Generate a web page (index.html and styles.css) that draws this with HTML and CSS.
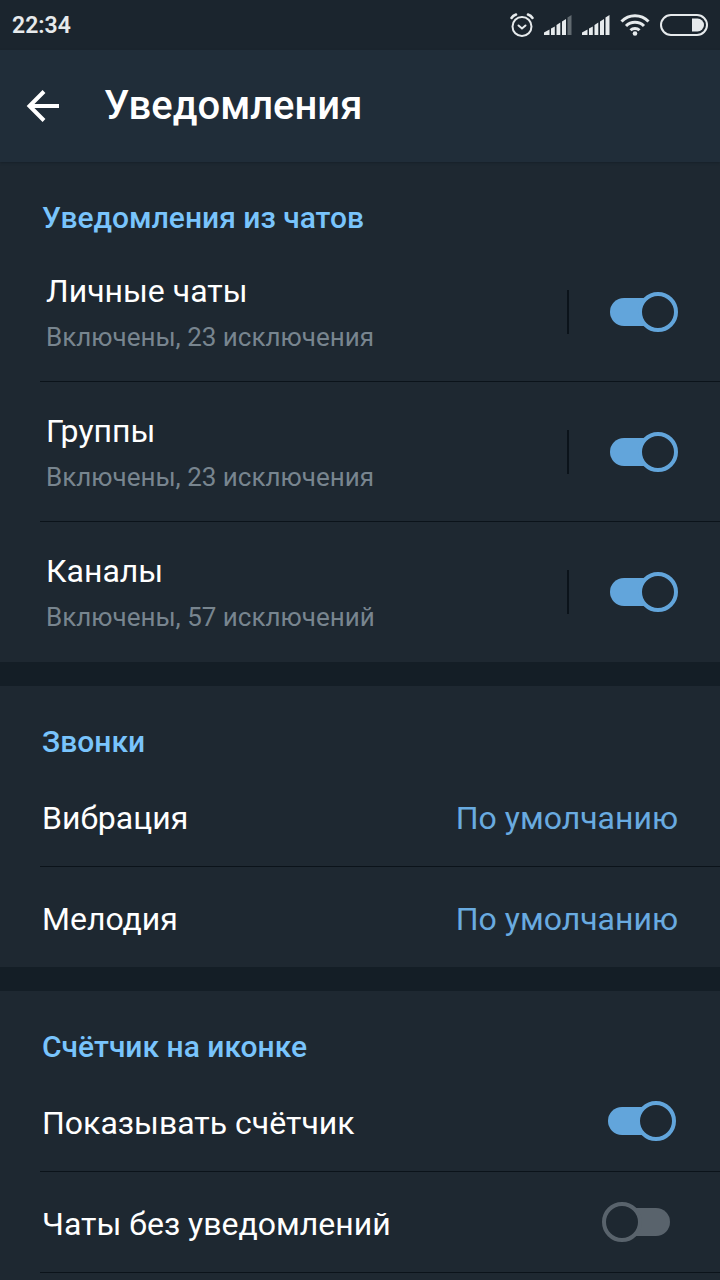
FILE: index.html
```html
<!DOCTYPE html>
<html lang="ru">

<head>
    <meta charset="UTF-8">
    <meta name="viewport" content="width=device-width, initial-scale=1.0">
    <title>Уведомления</title>
    <link rel="stylesheet" href="styles.css">
</head>

<body>
    <!-- status bar -->
    <div class="status">
        <span class="time">22:34</span>
        <div class="status-icons">
            <svg width="24" height="24" viewBox="0 0 24 24" fill="none" stroke="currentColor" stroke-width="2" stroke-linecap="round">
                <circle cx="12" cy="13.5" r="9.5" />
                <path d="M8.5 12.5l3.5 3 3.5-3" />
                <path stroke-width="2.5" d="M1.500 5Q3 2.500 6 1.500M22.500 5Q21 2.500 18 1.500" />
            </svg>
            <svg width="28" height="20" viewBox="0 0 28 20" fill="currentColor">
                <path d="M0 20v-2.500l5.500-3V20zM7 13.500l3.800-2V20H7zM12.500 10l3.800-2.500V20h-3.800zM18 6.500l4-2.500v16h-4z" />
                <path class="faded" d="M23.500 2.500L27.500 0v20h-4z" />
            </svg>
            <svg width="28" height="20" viewBox="0 0 28 20" fill="currentColor">
                <path d="M0 20v-2.500l5.500-3V20zM7 13.500l3.800-2V20H7zM12.500 10l3.800-2.500V20h-3.800zM18 6.500l4-2.500v16h-4zM23.500 2.500L27.500 0v20h-4z" />
            </svg>
            <svg width="30" height="22" viewBox="0 0 30 22" fill="none" stroke="currentColor" stroke-width="3">
                <path d="M1.500 7.500a19 19 0 0 1 27 0M6 12a12.700 12.700 0 0 1 18 0M10.500 16.300a6.400 6.400 0 0 1 9 0" />
                <circle cx="15" cy="19.500" r="2.300" fill="currentColor" stroke="none" />
            </svg>
            <svg width="48" height="22" viewBox="0 0 48 22">
                <rect x="1" y="1" width="46" height="20" rx="10" fill="none" stroke="currentColor" stroke-width="2" />
                <path d="M32 4.500h5.500a6.500 6.500 0 0 1 0 13H32z" fill="currentColor" />
            </svg>
        </div>
    </div>

    <header class="header">
        <button class="back" type="button" aria-label="Назад">
            <svg width="34" height="34" viewBox="0 0 34 34" fill="none" stroke="currentColor" stroke-width="4">
                <path d="M33 17H4M18 2.500L3.500 17 18 31.500" />
            </svg>
        </button>
        <h1>Уведомления</h1>
    </header>

    <main>
        <section class="chats">
            <h2>Уведомления из чатов</h2>
            <div class="row">
                <label class="text" for="private">Личные чаты<small>Включены, 23 исключения</small></label>
                <span class="divider"></span>
                <input class="switch" type="checkbox" id="private" checked>
            </div>
            <div class="row">
                <label class="text" for="groups">Группы<small>Включены, 23 исключения</small></label>
                <span class="divider"></span>
                <input class="switch" type="checkbox" id="groups" checked>
            </div>
            <div class="row">
                <label class="text" for="channels">Каналы<small>Включены, 57 исключений</small></label>
                <span class="divider"></span>
                <input class="switch" type="checkbox" id="channels" checked>
            </div>
        </section>

        <section>
            <h2>Звонки</h2>
            <button class="row" type="button"><span class="text">Вибрация</span><span class="value">По умолчанию</span></button>
            <button class="row" type="button"><span class="text">Мелодия</span><span class="value">По умолчанию</span></button>
        </section>

        <section class="badge">
            <h2>Счётчик на иконке</h2>
            <div class="row">
                <label class="text" for="counter">Показывать счётчик</label>
                <input class="switch" type="checkbox" id="counter" checked>
            </div>
            <div class="row">
                <label class="text" for="muted">Чаты без уведомлений</label>
                <input class="switch" type="checkbox" id="muted">
            </div>
        </section>
    </main>
</body>

</html>
```
FILE: styles.css
```css
*,
*::before,
*::after {
    margin: 0;
    padding: 0;
    box-sizing: border-box;
}

body {
    background-color: #1e2831;
    color: #fff;
    font-family: Roboto, "Noto Sans", sans-serif;
    font-size: 32px;
    line-height: 36px;
}

button {
    background: none;
    border: 0;
    color: inherit;
    font: inherit;
    text-align: left;
}

svg {
    display: block;
}

/* status bar */
.status {
    display: flex;
    align-items: center;
    justify-content: space-between;
    height: 50px;
    padding: 0 12px;
    background-color: #1b252e;
    color: #e6eaec;
}

.time {
    padding-top: 2px;
    font-size: 23px;
    font-weight: 600;
}

.status-icons {
    display: flex;
    align-items: center;
    gap: 10px;
}

.faded {
    opacity: 0.35;
}

/* header */
.header {
    display: flex;
    align-items: center;
    gap: 44px;
    height: 112px;
    padding: 0 26px;
    background-color: #202d39;
    box-shadow: 0 1px 2px #17212a;
}

h1 {
    font-size: 40px;
    font-weight: 500;
    line-height: 48px;
}

/* sections */
section + section {
    border-top: 24px solid #141e26;
}

h2 {
    padding: 38px 42px 6px;
    color: #79c4fc;
    font-size: 30px;
    font-weight: 500;
}

.row {
    display: flex;
    align-items: center;
    width: calc(100% - 40px);
    margin-left: 40px;
    padding: 30px 42px 30px 2px;
    border-bottom: 1px solid #0b131a;
}

.row:last-child {
    border-bottom: 0;
}

.text {
    flex: 1;
}

.text,
.value {
    padding-top: 4px;
}

.value {
    color: #69abe0;
}

.chats .row {
    min-height: 140px;
    padding: 24px 42px 24px 6px;
}

.chats .text {
    padding-top: 2px;
}

.chats small {
    display: block;
    padding-top: 12px;
    color: #78858f;
    font-size: 26px;
    line-height: 32px;
}

.divider {
    width: 2px;
    height: 44px;
    margin-right: 35px;
    background-color: #0b131a;
}

.badge .row {
    padding-right: 44px;
    border-bottom: 1px solid #0b131a;
}

/* switch */
.switch {
    position: relative;
    width: 74px;
    height: 40px;
    appearance: none;
    color: #59636c;
}

.switch:checked {
    color: #62a5db;
}

.switch::before {
    content: "";
    position: absolute;
    inset: 6px;
    border-radius: 14px;
    background-color: currentColor;
}

.switch::after {
    content: "";
    position: absolute;
    top: 0;
    left: 0;
    width: 40px;
    height: 40px;
    border: 4px solid currentColor;
    border-radius: 50%;
    background-color: #1e2831;
}

.switch:checked::after {
    left: 34px;
}
```
